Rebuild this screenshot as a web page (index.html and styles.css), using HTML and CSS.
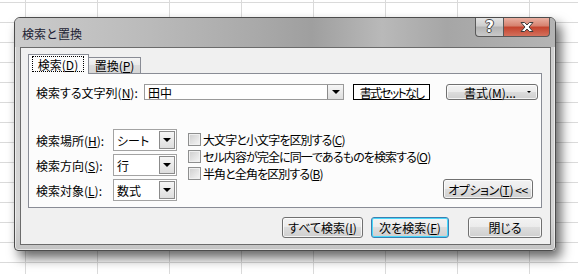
FILE: index.html
```html
<!DOCTYPE html>
<html lang="ja">

<head>
    <meta charset="UTF-8">
    <title>検索と置換</title>
    <link rel="stylesheet" href="styles.css">
</head>

<body>
    <div class="dialog">
        <div class="titlebar">
            <span class="title">検索と置換</span>
            <div class="caption">
                <span class="cap cap_help">?</span>
                <span class="cap cap_close">
                    <svg width="14" height="10" viewBox="0 0 14 10">
                        <polygon points="1,0.5 4.6,0.5 7,3 9.4,0.5 13,0.5 9,5 13,9.5 9.4,9.5 7,7 4.6,9.5 1,9.5 5,5"
                            fill="#fff" stroke="#3c3c3c" stroke-width="1" stroke-linejoin="round" />
                    </svg>
                </span>
            </div>
        </div>

        <div class="client">
            <div class="tabs">
                <div class="tab tab_active"><span class="focus">検索(<u>D</u>)</span></div>
                <div class="tab">置換(<u>P</u>)</div>
            </div>

            <div class="panel">
                <div class="row_find">
                    <span class="label_find">検索する文字列(<u>N</u>):</span>
                    <div class="combo combo_find"><span>田中</span><span class="drop"></span></div>
                    <div class="preview">書式セットなし</div>
                    <button class="btn btn_format"><span>書式(<u>M</u>)...</span><span class="mini_arrow"></span></button>
                </div>

                <div class="options">
                    <div class="fields">
                        <div class="field">
                            <span class="field_label">検索場所(<u>H</u>):</span>
                            <div class="combo"><span>シート</span><span class="drop"></span></div>
                        </div>
                        <div class="field">
                            <span class="field_label">検索方向(<u>S</u>):</span>
                            <div class="combo"><span>行</span><span class="drop"></span></div>
                        </div>
                        <div class="field">
                            <span class="field_label">検索対象(<u>L</u>):</span>
                            <div class="combo"><span>数式</span><span class="drop"></span></div>
                        </div>
                    </div>

                    <div class="checks">
                        <div class="check"><span class="box"></span>大文字と小文字を区別する(<u>C</u>)</div>
                        <div class="check"><span class="box"></span>セル内容が完全に同一であるものを検索する(<u>O</u>)</div>
                        <div class="check"><span class="box"></span>半角と全角を区別する(<u>B</u>)</div>
                    </div>

                    <button class="btn btn_options">オプション(<u>T</u>) &lt;&lt;</button>
                </div>
            </div>

            <div class="actions">
                <button class="btn btn_all">すべて検索(<u>I</u>)</button>
                <button class="btn btn_next">次を検索(<u>F</u>)</button>
                <button class="btn btn_close">閉じる</button>
            </div>
        </div>
    </div>
</body>

</html>
```

FILE: styles.css
```css
* {
    box-sizing: border-box;
}

body {
    margin: 0;
    width: 578px;
    height: 274px;
    overflow: hidden;
    background-color: #fff;
    background-image:
        linear-gradient(to right, #dadada 1px, transparent 1px),
        linear-gradient(to bottom, #dadada 1px, transparent 1px);
    background-size: 72px 20px;
    background-position: 25px 2px;
    font-family: "Noto Sans CJK JP", sans-serif;
    font-size: 12px;
    font-feature-settings: "palt";
    color: #000;
    white-space: nowrap;
}

u {
    text-underline-offset: 1px;
}

/* window frame */
.dialog {
    display: flex;
    flex-direction: column;
    width: 542px;
    height: 234px;
    margin: 17px 0 0 14px;
    border: 1px solid #4c4c4c;
    border-radius: 6px 6px 4px 4px;
    background: linear-gradient(to bottom, #bdbdbd, #cfcfcf 30px, #d6d6d6 85%, #c4c4c4);
    box-shadow: inset 0 0 0 1px rgba(255, 255, 255, .55), 5px 7px 12px rgba(0, 0, 0, .6);
}

.titlebar {
    display: flex;
    justify-content: space-between;
    align-items: flex-start;
    height: 29px;
    padding-left: 7px;
    border-radius: 5px 5px 0 0;
    background: linear-gradient(to right, #cbcbcb, #bababa 25%, #a9a9a9 45%, #9f9f9f 55%, #b9b9b9 68%, #a6a6a6 80%, #b4b4b4);
}

.title {
    padding-top: 1px;
    line-height: 30px;
    color: #1d1d33;
    font-feature-settings: normal;
}

.caption {
    display: flex;
    margin-right: 5px;
}

.cap {
    display: flex;
    align-items: center;
    justify-content: center;
    height: 19px;
    border: 1px solid #595959;
    border-top: none;
}

.cap_help {
    width: 28px;
    border-right: none;
    border-radius: 0 0 0 4px;
    background: linear-gradient(#e4e4e4, #cdcdcd 45%, #b3b3b3 50%, #c9c9c9);
    font-family: "DejaVu Sans", sans-serif;
    font-weight: bold;
    font-size: 15px;
    color: #fff;
    text-shadow: -1px 0 #444, 1px 0 #444, 0 -1px #444, 0 1px #444;
}

.cap_close {
    width: 47px;
    border-radius: 0 0 4px 0;
    background: linear-gradient(#eab0a2, #d5806d 45%, #c4432d 50%, #d3705c);
}

/* client area */
.client {
    flex: 1;
    display: flex;
    flex-direction: column;
    margin: 0 4px 5px 5px;
    padding: 6px 8px 6px 7px;
    border: 1px solid #6b6b6b;
    background: #f0f0f0;
}

.tabs {
    display: flex;
    align-items: flex-end;
    height: 19px;
}

.tab {
    display: flex;
    align-items: center;
    justify-content: center;
    width: 53px;
    height: 16px;
    margin-left: -1px;
    border: 1px solid #898c95;
    border-bottom: none;
    background: linear-gradient(#f4f4f4, #e9e9e9 50%, #dddddd 50%, #d6d6d6);
}

.tab_active {
    position: relative;
    z-index: 1;
    width: 61px;
    height: 20px;
    margin-left: 0;
    margin-bottom: -1px;
    justify-content: flex-start;
    padding-left: 3px;
    background: #fcfcfc;
}

.focus {
    display: flex;
    align-items: center;
    justify-content: center;
    width: 52px;
    height: 16px;
    margin-bottom: 1px;
    border: 1px dotted #000;
}

.panel {
    display: flex;
    flex-direction: column;
    justify-content: space-between;
    height: 135px;
    padding: 10px 7px 6px 7px;
    border: 1px solid #898c95;
    background: #fcfcfc;
}

.row_find {
    display: flex;
    align-items: center;
    height: 16px;
}

.label_find {
    flex-shrink: 0;
    width: 108px;
}

.combo {
    display: flex;
    flex-shrink: 0;
    align-items: center;
    justify-content: space-between;
    width: 64px;
    height: 22px;
    padding: 0 1px 0 3px;
    border: 1px solid #a3a3a3;
    background: #fff;
}

.combo_find {
    width: 200px;
    height: 16px;
    padding: 0 0 0 3px;
    border-color: #9a9a9a;
}

.drop {
    display: flex;
    align-items: center;
    justify-content: center;
    width: 16px;
    height: 18px;
    border: 1px solid #8b8b8b;
    background: linear-gradient(#f6f6f6, #dedede);
}

.combo_find .drop {
    height: 14px;
    border-top: none;
    border-bottom: none;
    border-right: none;
}

.drop::after {
    content: "";
    border-left: 4px solid transparent;
    border-right: 4px solid transparent;
    border-top: 4px solid #000;
}

.preview {
    display: flex;
    flex-shrink: 0;
    align-items: center;
    justify-content: center;
    width: 77px;
    height: 16px;
    margin-left: 9px;
    border: 1px solid #000;
    background: #fff;
    letter-spacing: -1.8px;
}

.btn {
    display: flex;
    flex-shrink: 0;
    align-items: center;
    justify-content: center;
    height: 21px;
    padding: 0;
    border: 1px solid #707070;
    border-radius: 3px;
    background: linear-gradient(#f3f3f3, #ebebeb 50%, #dddddd 50%, #cfcfcf);
    box-shadow: inset 0 0 0 1px rgba(255, 255, 255, .75);
    font: inherit;
    font-feature-settings: "palt";
    color: #000;
    white-space: nowrap;
}

.btn_format {
    justify-content: space-between;
    width: 92px;
    height: 16px;
    margin-left: 16px;
    padding: 0 6px 0 17px;
}

.mini_arrow {
    border-left: 2px solid transparent;
    border-right: 2px solid transparent;
    border-top: 2px solid #000;
}

.options {
    display: flex;
    align-items: flex-end;
}

.fields {
    display: flex;
    flex-direction: column;
    flex-shrink: 0;
    gap: 3px;
    width: 140px;
}

.field {
    display: flex;
    align-items: center;
}

.field_label {
    flex-shrink: 0;
    width: 77px;
}

.checks {
    display: flex;
    flex-direction: column;
    flex-shrink: 0;
    align-self: flex-start;
    margin-left: 12px;
    padding-top: 2px;
    letter-spacing: -0.9px;
}

.check {
    display: flex;
    align-items: center;
    height: 17px;
}

.box {
    flex-shrink: 0;
    width: 13px;
    height: 13px;
    margin-right: 2px;
    border: 1px solid #8e8f8f;
    background: linear-gradient(135deg, #cdcdcd, #f6f6f6);
    box-shadow: inset 0 0 0 1px #f0f0f0;
}

.btn_options {
    width: 90px;
    height: 20px;
    margin: 0 1px 2px auto;
    letter-spacing: -0.4px;
}

.actions {
    display: flex;
    justify-content: flex-end;
    margin-top: 9px;
}

.btn_all {
    width: 81px;
}

.btn_next {
    width: 78px;
    margin-left: 8px;
    border-color: #3c7fb1;
    box-shadow: inset 0 0 0 1px #48d8fb;
}

.btn_close {
    width: 74px;
    margin-left: 19px;
}
```
